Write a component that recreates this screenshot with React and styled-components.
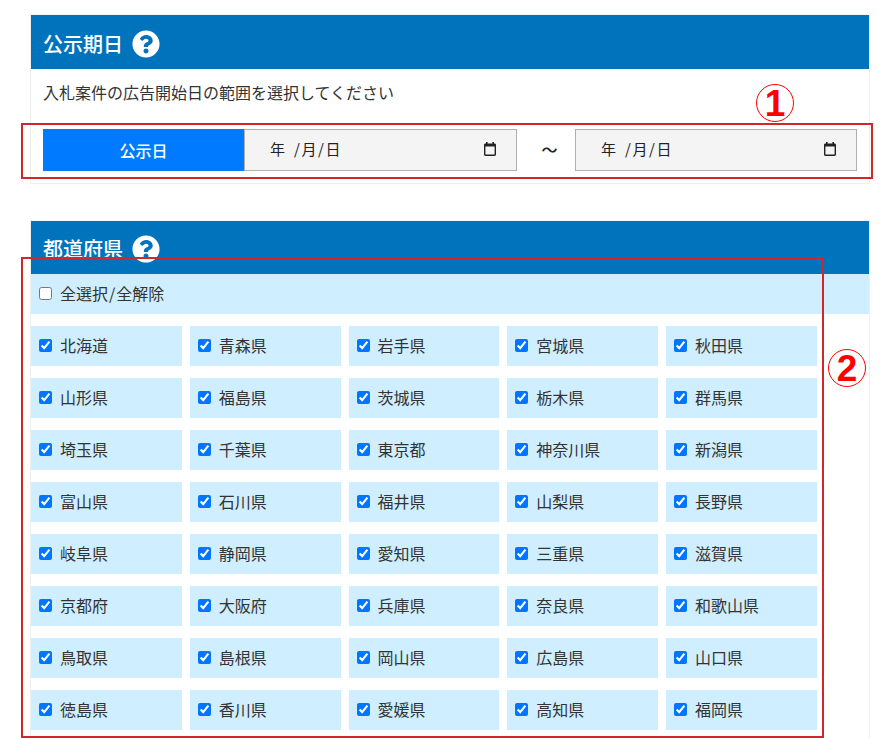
import React from "react";
import styled, { createGlobalStyle } from "styled-components";
import { FaQuestionCircle } from "react-icons/fa";

const GlobalStyle = createGlobalStyle`
  html, body {
    margin: 0;
    padding: 0;
    background: #fff;
    overflow: hidden;
  }
  body {
    height: 738px;
    font-family: "Noto Sans CJK JP", "Noto Sans", sans-serif;
    color: #333;
  }
`;

const Page = styled.div`
  padding: 14px 23px 0 30px;
  display: flex;
  flex-direction: column;
  gap: 36px;
`;

const Card = styled.section`
  position: relative;
  border: 1px solid #eee;
  border-top-color: #f4f4f4;
  background: #fff;
`;

const CardHeader = styled.header`
  box-sizing: border-box;
  height: ${(p) => p.$height}px;
  padding: 3px 0 0 12px;
  background: #0073bd;
  color: #fff;
  display: flex;
  align-items: center;
  gap: 9px;
  font-size: 20px;
  font-weight: 500;
  line-height: 1;

  svg {
    width: 28px;
    height: 28px;
  }
`;

const Description = styled.p`
  margin: 0;
  padding: 11px 12px 0;
  height: 49px;
  font-size: 16px;
  line-height: 24px;
`;

const DateRow = styled.div`
  display: flex;
  align-items: stretch;
  height: 42px;
  padding: 0 12px 12px;
`;

const DateLabel = styled.div`
  width: 201px;
  background: #007bff;
  color: #fff;
  font-size: 16px;
  font-weight: 500;
  display: flex;
  align-items: center;
  justify-content: center;
`;

const DateField = styled.div`
  box-sizing: border-box;
  width: ${(p) => p.$width}px;
  height: 42px;
  padding: 0 19px 0 25px;
  border: 1px solid #b0b0b0;
  background: #f4f4f4;
  color: #222;
  display: flex;
  align-items: center;
  justify-content: space-between;
  font-size: 15px;
`;

const DateText = styled.span`
  white-space: pre;
  letter-spacing: 1.6px;
  word-spacing: 2.4px;
  margin-bottom: 4px;
`;

const CalendarIcon = styled.svg`
  width: 14px;
  height: 14px;
  flex: none;
  margin-bottom: 2px;
`;

const Tilde = styled.span`
  box-sizing: border-box;
  width: 58px;
  padding: 0 0 2px 7px;
  display: flex;
  align-items: center;
  justify-content: center;
  font-size: 16px;
  font-weight: 500;
  color: #222;
`;

const SelectAllRow = styled.label`
  height: 40px;
  background: #cfeeff;
  display: flex;
  align-items: center;
  gap: 8px;
  padding-left: 8px;
  font-size: 16px;
`;

const Grid = styled.div`
  display: grid;
  grid-template-columns: repeat(5, 150.75px);
  column-gap: 8px;
  row-gap: 12px;
  padding: 12px 0 40px;
`;

const Cell = styled.label`
  height: 40px;
  background: #cfeeff;
  display: flex;
  align-items: center;
  gap: 8px;
  padding-left: 8px;
  font-size: 16px;
`;

const Check = styled.input`
  width: 13px;
  height: 13px;
  margin: 0 0 2px;
  flex: none;
`;

const LabelText = styled.span`
  margin-top: -2px;
`;

const Slash = styled.span`
  padding: 0 1px;
`;

const Outline = styled.div`
  position: absolute;
  top: ${(p) => p.$top}px;
  left: ${(p) => p.$left}px;
  width: ${(p) => p.$width}px;
  height: ${(p) => p.$height}px;
  border: 2px solid #d1262a;
  box-sizing: border-box;
  pointer-events: none;
`;

const Marker = styled.span`
  position: absolute;
  top: ${(p) => p.$top}px;
  left: ${(p) => p.$left}px;
  width: 38px;
  height: 38px;
  box-sizing: border-box;
  border: 1.5px solid #ff0000;
  border-radius: 50%;
  color: #ff0000;
  display: flex;
  align-items: center;
  justify-content: center;
  font-family: "Liberation Sans", Arial, sans-serif;
  font-size: 37px;
  font-weight: 700;
  line-height: 1;
`;

const PREFECTURES = [
  "北海道", "青森県", "岩手県", "宮城県", "秋田県",
  "山形県", "福島県", "茨城県", "栃木県", "群馬県",
  "埼玉県", "千葉県", "東京都", "神奈川県", "新潟県",
  "富山県", "石川県", "福井県", "山梨県", "長野県",
  "岐阜県", "静岡県", "愛知県", "三重県", "滋賀県",
  "京都府", "大阪府", "兵庫県", "奈良県", "和歌山県",
  "鳥取県", "島根県", "岡山県", "広島県", "山口県",
  "徳島県", "香川県", "愛媛県", "高知県", "福岡県",
];

const DatePlaceholder = ({ width }) => (
  <DateField $width={width}>
    <DateText>年 /月/日</DateText>
    <CalendarIcon viewBox="0 0 14 14">
      <path
        fill="#222"
        d="M3 0h1.6v1.4h4.8V0H11v1.4h.6c.8 0 1.4.6 1.4 1.4v9.8c0 .8-.6 1.4-1.4 1.4H2.4C1.6 14 1 13.4 1 12.6V2.8c0-.8.6-1.4 1.4-1.4H3V0zm-.6 4.4v8.2h9.2V4.4H2.4z"
      />
    </CalendarIcon>
  </DateField>
);

export default function App() {
  return (
    <>
      <GlobalStyle />
      <Page lang="ja">
        <Card>
          <CardHeader $height={54}>
            公示期日
            <FaQuestionCircle />
          </CardHeader>
          <Description>入札案件の広告開始日の範囲を選択してください</Description>
          <DateRow>
            <DateLabel>公示日</DateLabel>
            <DatePlaceholder width={273} />
            <Tilde>～</Tilde>
            <DatePlaceholder width={282} />
          </DateRow>
          <Outline $top={108} $left={-10} $width={852} $height={56} />
          <Marker $top={69} $left={725}>1</Marker>
        </Card>
        <Card>
          <CardHeader $height={53}>
            都道府県
            <FaQuestionCircle />
          </CardHeader>
          <SelectAllRow>
            <Check type="checkbox" />
            <LabelText>全選択<Slash>/</Slash>全解除</LabelText>
          </SelectAllRow>
          <Grid>
            {PREFECTURES.map((name) => (
              <Cell key={name}>
                <Check type="checkbox" defaultChecked />
                <LabelText>{name}</LabelText>
              </Cell>
            ))}
          </Grid>
          <Outline $top={36} $left={-10} $width={803} $height={481} />
          <Marker $top={128} $left={797}>2</Marker>
        </Card>
      </Page>
    </>
  );
}
